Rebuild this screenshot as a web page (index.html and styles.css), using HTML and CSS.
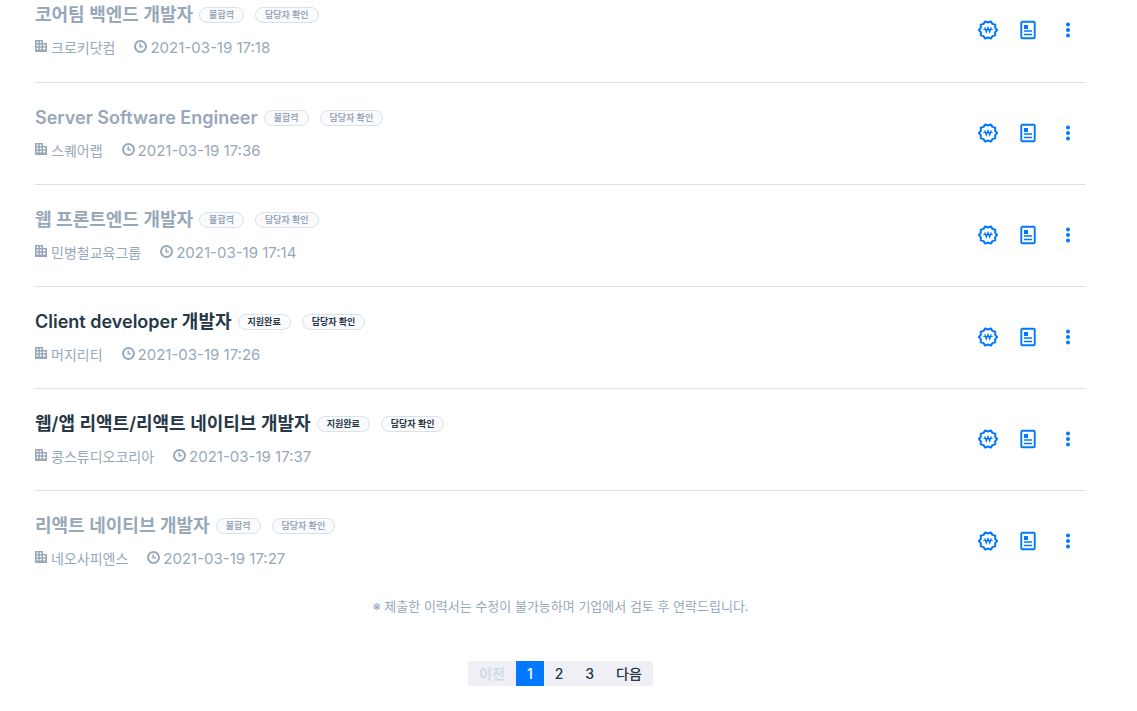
FILE: index.html
```html
<!DOCTYPE html>
<html lang="ko">
<head>
    <title>지원 현황</title>
    <meta charset="UTF-8">
    <meta name="viewport" content="width=device-width, initial-scale=1">
    <link rel="stylesheet" href="styles.css">
</head>
<body>
    <!-- shared icons -->
    <svg class="sprite" aria-hidden="true">
        <symbol id="building" viewBox="0 0 12 12">
            <path fill="currentColor" fill-rule="evenodd" d="M0 0h8v3h4v9H0zM1.6 1.4v1.6h1.7V1.4zM4.8 1.4v1.6h1.7V1.4zM1.6 4.6v1.6h1.7V4.6zM4.8 4.6v1.6h1.7V4.6zM8 4.6v1.6h2.4V4.6zM1.6 7.8v1.7h1.7V7.8zM4.8 7.8v1.7h1.7V7.8zM8 7.8v1.7h2.4V7.8z" />
        </symbol>
        <symbol id="clock" viewBox="0 0 13 13">
            <circle cx="6.5" cy="6.5" r="5.5" fill="none" stroke="currentColor" stroke-width="2" />
            <path d="M6.2 3.5v3.3h2.7" fill="none" stroke="currentColor" stroke-width="1.6" />
        </symbol>
        <symbol id="won" viewBox="-10 -10 20 20">
            <g fill="none" stroke="currentColor">
                <path stroke-width="2" stroke-linejoin="round" d="M9 0L7.1 2.3 7.3 5.3 4.4 6.1 2.8 8.6 0 7.5-2.8 8.6-4.4 6.1-7.3 5.3-7.1 2.3-9 0-7.1-2.3-7.3-5.3-4.4-6.1-2.8-8.6 0-7.5 2.8-8.6 4.4-6.1 7.3-5.3 7.1-2.3z" />
                <path stroke-width="1.4" d="M-3.2-2.6L-1.7 2 0-2.4 1.7 2 3.2-2.6" />
                <path stroke-width="1" d="M-4.7-.5h9.4" />
            </g>
        </symbol>
        <symbol id="resume" viewBox="0 0 20 20">
            <rect x="3.3" y="1.8" width="13.4" height="16.4" rx="1" fill="none" stroke="currentColor" stroke-width="1.9" />
            <path fill="currentColor" d="M6 5h4v4H6zM6 10.2h8v1.5H6zM6 13.7h8v1.5H6z" />
        </symbol>
        <symbol id="more" viewBox="0 0 20 20">
            <g fill="currentColor">
                <circle cx="10" cy="4.5" r="2" />
                <circle cx="10" cy="10" r="2" />
                <circle cx="10" cy="15.5" r="2" />
            </g>
        </symbol>
    </svg>

    <ul class="list">
        <li class="item closed">
            <div class="info">
                <div class="top">
                    <h2>코어팀 백엔드 개발자</h2>
                    <span class="badge">불합격</span>
                    <span class="badge">담당자 확인</span>
                </div>
                <div class="meta">
                    <span><svg class="building"><use href="#building" /></svg>크로키닷컴</span>
                    <span class="date"><svg><use href="#clock" /></svg>2021-03-19 17:18</span>
                </div>
            </div>
            <div class="actions">
                <button type="button" aria-label="연봉"><svg><use href="#won" /></svg></button>
                <button type="button" aria-label="이력서"><svg><use href="#resume" /></svg></button>
                <button type="button" aria-label="더보기"><svg><use href="#more" /></svg></button>
            </div>
        </li>
        <li class="item closed">
            <div class="info">
                <div class="top">
                    <h2>Server Software Engineer</h2>
                    <span class="badge">불합격</span>
                    <span class="badge">담당자 확인</span>
                </div>
                <div class="meta">
                    <span><svg class="building"><use href="#building" /></svg>스퀘어랩</span>
                    <span class="date"><svg><use href="#clock" /></svg>2021-03-19 17:36</span>
                </div>
            </div>
            <div class="actions">
                <button type="button" aria-label="연봉"><svg><use href="#won" /></svg></button>
                <button type="button" aria-label="이력서"><svg><use href="#resume" /></svg></button>
                <button type="button" aria-label="더보기"><svg><use href="#more" /></svg></button>
            </div>
        </li>
        <li class="item closed">
            <div class="info">
                <div class="top">
                    <h2>웹 프론트엔드 개발자</h2>
                    <span class="badge">불합격</span>
                    <span class="badge">담당자 확인</span>
                </div>
                <div class="meta">
                    <span><svg class="building"><use href="#building" /></svg>민병철교육그룹</span>
                    <span class="date"><svg><use href="#clock" /></svg>2021-03-19 17:14</span>
                </div>
            </div>
            <div class="actions">
                <button type="button" aria-label="연봉"><svg><use href="#won" /></svg></button>
                <button type="button" aria-label="이력서"><svg><use href="#resume" /></svg></button>
                <button type="button" aria-label="더보기"><svg><use href="#more" /></svg></button>
            </div>
        </li>
        <li class="item">
            <div class="info">
                <div class="top">
                    <h2>Client developer 개발자</h2>
                    <span class="badge">지원완료</span>
                    <span class="badge">담당자 확인</span>
                </div>
                <div class="meta">
                    <span><svg class="building"><use href="#building" /></svg>머지리티</span>
                    <span class="date"><svg><use href="#clock" /></svg>2021-03-19 17:26</span>
                </div>
            </div>
            <div class="actions">
                <button type="button" aria-label="연봉"><svg><use href="#won" /></svg></button>
                <button type="button" aria-label="이력서"><svg><use href="#resume" /></svg></button>
                <button type="button" aria-label="더보기"><svg><use href="#more" /></svg></button>
            </div>
        </li>
        <li class="item">
            <div class="info">
                <div class="top">
                    <h2>웹/앱 리액트/리액트 네이티브 개발자</h2>
                    <span class="badge">지원완료</span>
                    <span class="badge">담당자 확인</span>
                </div>
                <div class="meta">
                    <span><svg class="building"><use href="#building" /></svg>콩스튜디오코리아</span>
                    <span class="date"><svg><use href="#clock" /></svg>2021-03-19 17:37</span>
                </div>
            </div>
            <div class="actions">
                <button type="button" aria-label="연봉"><svg><use href="#won" /></svg></button>
                <button type="button" aria-label="이력서"><svg><use href="#resume" /></svg></button>
                <button type="button" aria-label="더보기"><svg><use href="#more" /></svg></button>
            </div>
        </li>
        <li class="item closed">
            <div class="info">
                <div class="top">
                    <h2>리액트 네이티브 개발자</h2>
                    <span class="badge">불합격</span>
                    <span class="badge">담당자 확인</span>
                </div>
                <div class="meta">
                    <span><svg class="building"><use href="#building" /></svg>네오사피엔스</span>
                    <span class="date"><svg><use href="#clock" /></svg>2021-03-19 17:27</span>
                </div>
            </div>
            <div class="actions">
                <button type="button" aria-label="연봉"><svg><use href="#won" /></svg></button>
                <button type="button" aria-label="이력서"><svg><use href="#resume" /></svg></button>
                <button type="button" aria-label="더보기"><svg><use href="#more" /></svg></button>
            </div>
        </li>
    </ul>

    <p class="notice">※ 제출한 이력서는 수정이 불가능하며 기업에서 검토 후 연락드립니다.</p>

    <nav class="pages">
        <button type="button" disabled>이전</button>
        <button type="button" class="active">1</button>
        <button type="button">2</button>
        <button type="button">3</button>
        <button type="button">다음</button>
    </nav>
</body>
</html>
```
FILE: styles.css
```css
* {
    box-sizing: border-box;
}

body {
    margin: 0;
    padding: 0 51px 0 35px;
    background: #fff;
    color: #263747;
    font-family: Inter, "Noto Sans CJK KR", sans-serif;
    font-size: 14px;
}

button {
    font: inherit;
    border: none;
    cursor: pointer;
}

.sprite {
    display: none;
}

.list {
    margin: 0;
    padding: 0;
    list-style: none;
}

.item {
    display: flex;
    justify-content: space-between;
    align-items: center;
    padding: 20px 0 21px;
    border-bottom: 1px solid #d7e2eb;
}

.item:first-child {
    padding: 0 0 22px;
}

.item:last-child {
    border-bottom: none;
    padding-bottom: 0;
}

.top {
    display: flex;
    align-items: center;
    gap: 11px;
    height: 29px;
}

.top h2 {
    margin: 0 -5px 0 0;
    font-size: 18px;
    font-weight: 600;
    line-height: 29px;
}

.badge {
    padding: 0 9px;
    border: 1px solid #d7e2eb;
    border-radius: 10px;
    background: #fbfbfd;
    font-size: 9px;
    font-weight: 600;
    line-height: 14px;
}

.closed .top {
    color: #98a8b9;
}

.meta {
    display: flex;
    gap: 19px;
    margin-top: 7px;
    color: #98a8b9;
    line-height: 24px;
}

.meta span {
    display: flex;
    align-items: center;
    gap: 4px;
}

.meta .date {
    gap: 3px;
    font-size: 15px;
}

.meta svg {
    width: 13px;
    height: 13px;
    margin-bottom: 4px;
}

.meta .building {
    width: 12px;
    height: 12px;
}

.actions {
    display: flex;
    gap: 20px;
    padding-right: 8px;
}

.actions button {
    padding: 0;
    background: none;
    color: #0078ff;
}

.actions svg {
    display: block;
    width: 20px;
    height: 20px;
}

.notice {
    margin: 25px 0 0;
    color: #98a8b9;
    font-size: 13px;
    line-height: 20px;
    text-align: center;
}

.pages {
    display: flex;
    width: fit-content;
    margin: 45px auto 25px;
    border-radius: 3px;
    background: #efeff5;
    overflow: hidden;
}

.pages button {
    padding: 0 11px;
    background: none;
    color: #263747;
    font-weight: 500;
    line-height: 25px;
}

.pages .active {
    background: #0078ff;
    color: #fff;
}

.pages button:disabled {
    color: #d0dae4;
    font-weight: 700;
    cursor: default;
}
```
